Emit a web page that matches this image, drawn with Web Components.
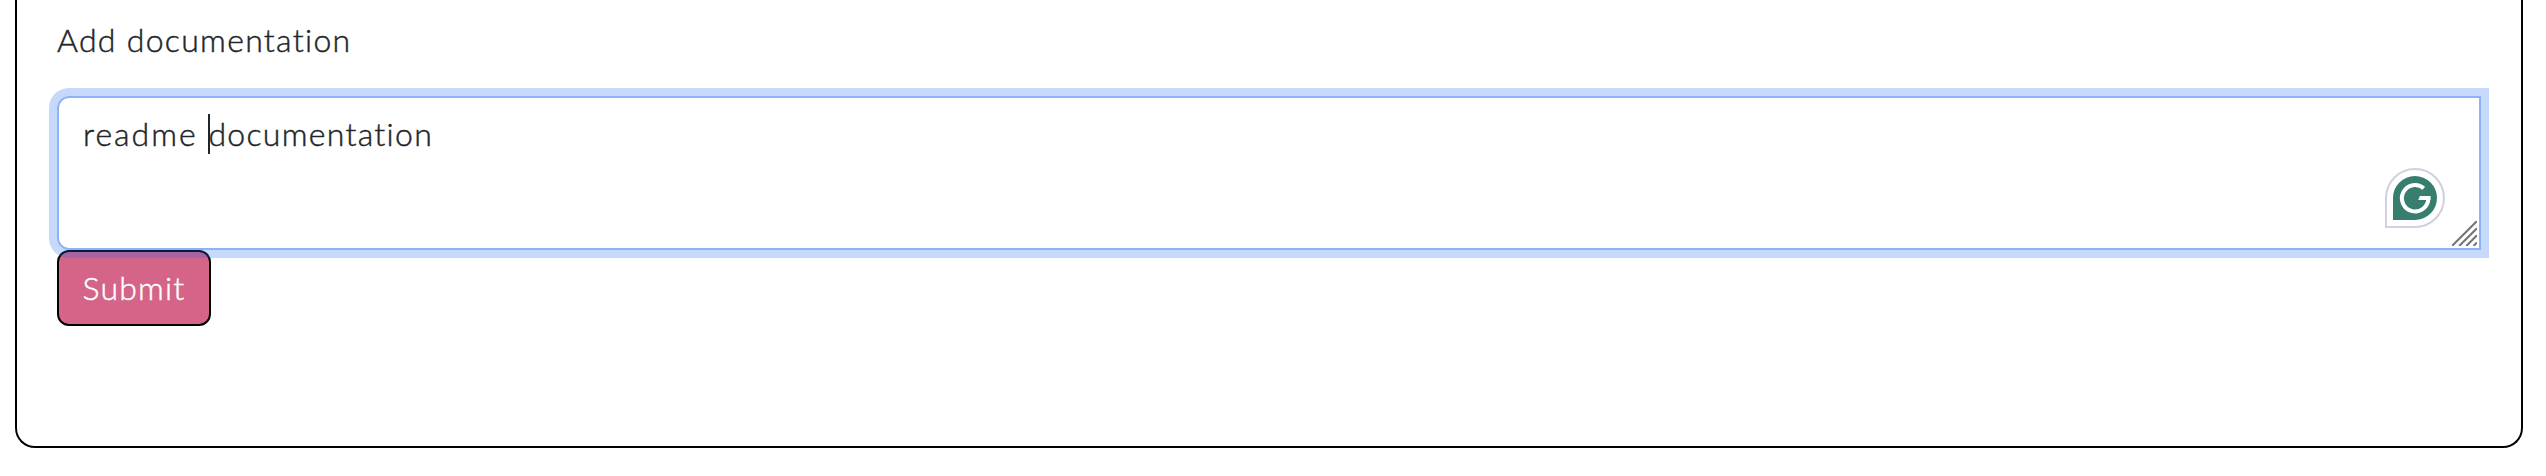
<!DOCTYPE html>
<html lang="en"><head><meta charset="utf-8"><title>Add documentation</title>
<style>body{margin:0;background:#fff;height:476px;overflow:hidden}</style></head><body>
<doc-card><doc-label>Add documentation</doc-label><doc-field><span slot="before">readme </span><span slot="after">documentation</span></doc-field><doc-button>Submit</doc-button></doc-card>
<script>
const define=(name,html)=>customElements.define(name,class extends HTMLElement{
  constructor(){super();this.attachShadow({mode:'open'}).innerHTML=html;}
});
define('writing-badge',`<style>:host{display:block;width:60px;height:60px}svg{display:block}</style>
<svg width="60" height="60" viewBox="0 0 60 60"><path d="M1 59V30A29 29 0 1 1 30 59Z" fill="#fff" stroke="#cfd1de" stroke-width="2"/><path d="M8 52V30A22 22 0 1 1 30 52Z" fill="#387e6f"/><path d="M38.8 20.3A13.2 13.2 0 1 0 43.3 30H34.6" fill="none" stroke="#fff" stroke-width="4"/><path d="M33.2 32 35.3 28H45.5V32Z" fill="#fff"/></svg>`);
define('resize-grip',`<style>:host{display:block;width:25px;height:25px}svg{display:block}</style>
<svg width="25" height="25" viewBox="0 0 25 25" fill="none" stroke="#757575" stroke-width="2.1"><path d="M0 25 25 0M7.2 25 25 7.2M14.3 25 25 14.3M21.5 25 25 21.5"/></svg>`);
define('doc-label',`<style>:host{display:block;height:48px;line-height:48px;font-size:32px;letter-spacing:1.3px;color:#212529;white-space:pre;-webkit-text-stroke:.45px #212529}</style><slot></slot>`);
define('doc-field',`<style>
:host{display:block;position:relative;z-index:1;box-sizing:border-box;height:154px;padding:12px 24px;border:2px solid #8cb2fa;border-radius:12px 0 0 12px;box-shadow:0 0 0 8px rgba(28,104,240,.25);font-size:32px;line-height:48px;letter-spacing:1.3px;color:#212529;-webkit-text-stroke:.45px #212529}
.line{display:flex;white-space:pre}
slot[name=before]::slotted(*){letter-spacing:2px}
.caret{width:2px;height:40px;margin:4px -2px 0 0;background:#212529}
writing-badge{position:absolute;right:34px;top:70px}
resize-grip{position:absolute;right:2px;bottom:2px}
</style><div class="line"><slot name="before"></slot><i class="caret"></i><slot name="after"></slot></div><writing-badge></writing-badge><resize-grip></resize-grip>`);
define('doc-button',`<style>:host{display:block}button{display:flex;align-items:center;justify-content:center;box-sizing:border-box;width:154px;height:76px;margin:0;padding:0;border:2px solid #000;border-radius:12px;background:#d46589;color:#fff;font:inherit;font-size:32px;line-height:48px;letter-spacing:1.2px;-webkit-text-stroke:.45px #fff}</style><button type="button"><slot></slot></button>`);
define('doc-card',`<style>:host{display:flex;flex-direction:column;box-sizing:border-box;height:448px;margin:0 23px 0 15px;padding:16px 40px 0;border:2px solid #000;border-top:0;border-radius:0 0 20px 20px;font-family:Lato,"Open Sans",sans-serif;font-weight:300}
::slotted(doc-field){margin-top:32px}</style><slot></slot>`);
</script></body></html>
